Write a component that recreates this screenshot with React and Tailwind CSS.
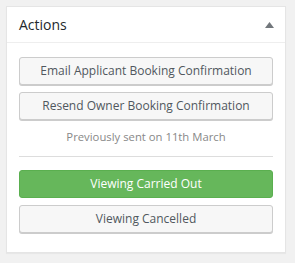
export default function App() {
  const btn =
    "h-[28px] w-full rounded-[3px] border border-[#cccccc] bg-[#f7f7f7] shadow-[0_1px_0_#cccccc] text-[12px] text-[#50575e] flex items-center justify-center";
  return (
    <div
      className="w-[295px] h-[263px] bg-[#f1f1f1] pt-[6px] pl-[6px] pr-[9px]"
      style={{ fontFamily: '"Open Sans", "Noto Sans", sans-serif' }}
    >
      <div className="border border-[#e5e5e5] bg-white shadow-[0_1px_1px_rgba(0,0,0,0.04)] h-[247px]">
        <div className="h-[36px] border-b border-[#eeeeee] flex items-center justify-between pl-[12px] pr-[11px]">
          <span className="text-[14px] text-[#23282d]">Actions</span>
          <svg width="9" height="6" viewBox="0 0 9 6">
            <path d="M4.5 0 L9 6 L0 6 Z" fill="#72777c" />
          </svg>
        </div>
        <div className="px-[12px] pt-[14px]">
          <div className="flex flex-col gap-[7px]">
            <button className={btn}>Email Applicant Booking Confirmation</button>
            <button className={btn}>Resend Owner Booking Confirmation</button>
          </div>
          <div className="mt-[7px] h-[20px] leading-[20px] text-center text-[11.3px] text-[#888888]">
            Previously sent on 11th March
          </div>
          <div className="mt-[9px] h-px bg-[#dddddd]" />
          <div className="mt-[13px] flex flex-col gap-[7px]">
            <button className="h-[28px] w-full rounded-[3px] border border-[#5aaf4f] bg-[#66b75b] text-[12px] text-white flex items-center justify-center">
              Viewing Carried Out
            </button>
            <button className={btn}>Viewing Cancelled</button>
          </div>
        </div>
      </div>
    </div>
  );
}
